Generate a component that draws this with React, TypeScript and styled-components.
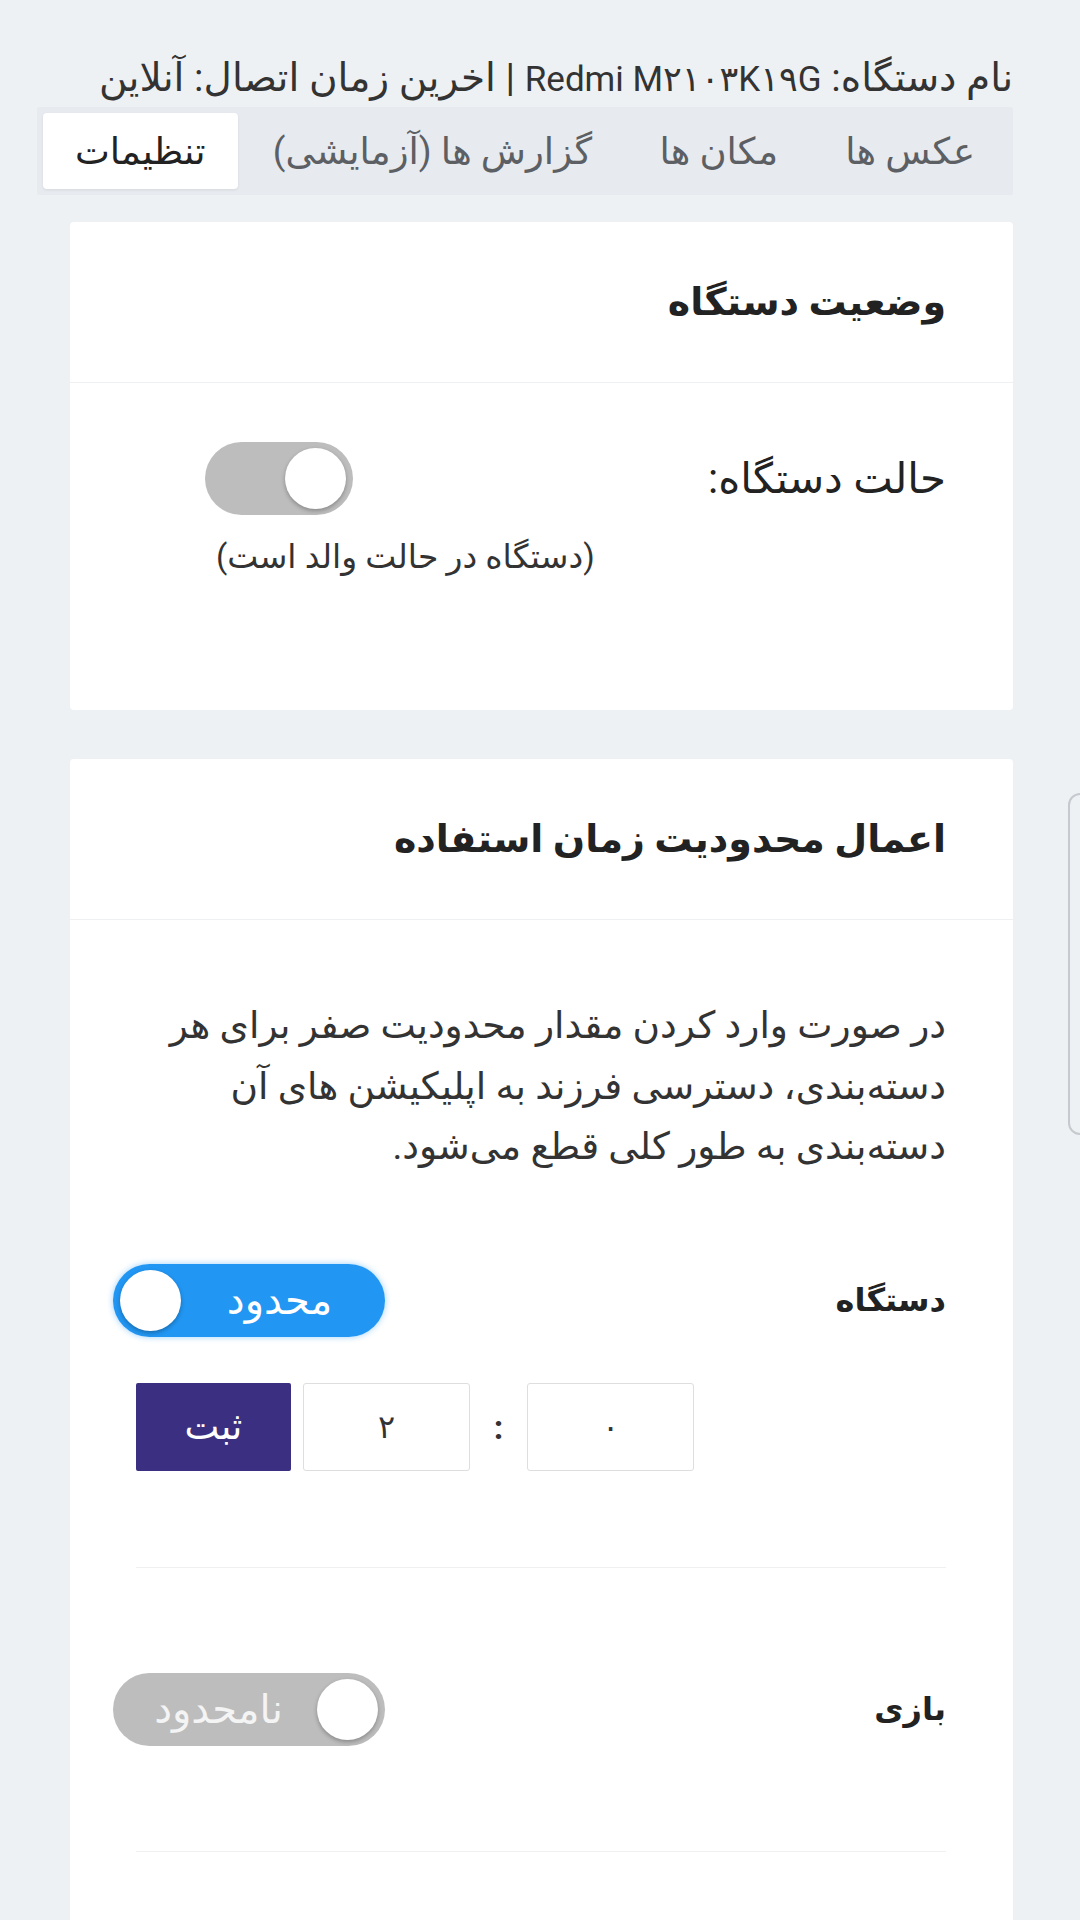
import React from 'react';
import styled, { createGlobalStyle } from 'styled-components';

const GlobalStyle = createGlobalStyle`
  body {
    margin: 0;
    background: #eef1f4;
    font-family: Roboto, "DejaVu Sans", sans-serif;
    direction: rtl;
    overflow-x: hidden;
    color: #222;
  }
`;

const Page = styled.div`
  padding: 53px 67px 0 37px;
`;

const DeviceInfo = styled.div`
  font-size: 39px;
  line-height: 50px;
  color: #333;
  white-space: nowrap;
`;

const Latin = styled.span`
  font-size: 35px;
`;

const TabBar = styled.div`
  margin-top: 2px;
  height: 88px;
  box-sizing: border-box;
  padding: 6px;
  background: #e7eaee;
  display: flex;
  justify-content: space-between;
  border-radius: 2px;
`;

const Tab = styled.div<{ $active?: boolean }>`
  display: flex;
  align-items: center;
  padding: 0 32px;
  font-size: 37px;
  color: ${p => (p.$active ? '#222' : '#5c5f63')};
  background: ${p => (p.$active ? '#fff' : 'transparent')};
  border-radius: 4px;
  box-shadow: ${p => (p.$active ? '0 1px 3px rgba(0,0,0,0.08)' : 'none')};
`;

const Cards = styled.div`
  margin: 27px 0 0 33px;
`;

const Card = styled.div`
  background: #fff;
  border-radius: 4px;
  margin-bottom: 49px;
`;

const CardHeader = styled.div`
  height: 160px;
  display: flex;
  align-items: center;
  padding: 0 67px 0 66px;
  border-bottom: 1px solid #eef0f2;
`;

const CardTitle = styled.h3`
  margin: 0;
  font-size: 38px;
  font-weight: 700;
  color: #222;
`;

const CardBody = styled.div<{ $pad: string }>`
  padding: ${p => p.$pad};
`;

const StatusRow = styled.div`
  display: flex;
  justify-content: space-between;
  align-items: flex-start;
`;

const RowLabel = styled.div<{ $bold?: boolean }>`
  font-size: ${p => (p.$bold ? 32 : 42)}px;
  line-height: 73px;
  font-weight: ${p => (p.$bold ? 700 : 400)};
  color: #222;
`;

const ToggleColumn = styled.div`
  display: flex;
  flex-direction: column;
  align-items: flex-end;
  margin-left: 69px;
`;

const Hint = styled.div`
  margin: 22px 0 0 11px;
  font-size: 33px;
  line-height: 40px;
  color: #333;
`;

const Switch = styled.div<{ $on?: boolean; $wide?: boolean }>`
  direction: ltr;
  width: ${p => (p.$wide ? 272 : 148)}px;
  height: 73px;
  margin-left: ${p => (p.$wide ? -23 : 0)}px;
  box-sizing: border-box;
  padding: 6px 7px;
  border-radius: 37px;
  background: ${p => (p.$on ? '#2196f3' : '#bdbdbd')};
  box-shadow: ${p => (p.$on ? '0 0 6px rgba(33,150,243,0.45)' : 'none')};
  display: flex;
  flex-direction: ${p => (p.$on ? 'row' : 'row-reverse')};
  align-items: center;
`;

const Knob = styled.div`
  width: 61px;
  height: 61px;
  border-radius: 50%;
  background: #fff;
  box-shadow: 0 2px 4px rgba(0, 0, 0, 0.28);
  flex-shrink: 0;
`;

const SwitchText = styled.span<{ $on?: boolean }>`
  flex: 1;
  text-align: center;
  font-size: 40px;
  color: ${p => (p.$on ? '#fff' : '#f4f4f4')};
  direction: rtl;
`;

const Note = styled.p`
  margin: 0;
  font-size: 37.5px;
  line-height: 60.5px;
  color: #333;
`;

const Category = styled.div<{ $limited?: boolean }>`
  padding: 105px 0 ${p => (p.$limited ? 96 : 105)}px;
  border-bottom: 1px solid #f0f0f0;

  &:first-of-type {
    padding-top: 87px;
  }
`;

const CategoryHead = styled.div`
  display: flex;
  justify-content: space-between;
  align-items: center;
`;

const LimitRow = styled.div`
  direction: ltr;
  display: flex;
  align-items: stretch;
  height: 88px;
  margin-top: 46px;
`;

const SaveButton = styled.button`
  width: 155px;
  margin-right: 12px;
  border: none;
  border-radius: 2px;
  background: #3a2f80;
  color: #fff;
  font-family: inherit;
  font-size: 37px;
`;

const TimeInput = styled.input`
  width: 167px;
  box-sizing: border-box;
  border: 1px solid #dedede;
  border-radius: 3px;
  text-align: center;
  font-family: inherit;
  font-size: 32px;
  color: #333;
  background: #fff;
  outline: none;
`;

const Colon = styled.div`
  width: 57px;
  display: flex;
  align-items: center;
  justify-content: center;
  font-size: 34px;
  font-weight: 700;
  color: #333;
`;

const SideHandle = styled.div`
  position: fixed;
  top: 793px;
  left: 1068px;
  width: 60px;
  height: 342px;
  box-sizing: border-box;
  border: 2px solid #c6cacf;
  border-radius: 12px;
  background: #eef1f4;
`;

const categories = [
  { name: 'دستگاه', limited: true },
  { name: 'بازی', limited: false },
];

const LabeledSwitch: React.FC<{ on: boolean }> = ({ on }) => (
  <Switch $on={on} $wide>
    <Knob />
    <SwitchText $on={on}>{on ? 'محدود' : 'نامحدود'}</SwitchText>
  </Switch>
);

export default function App() {
  return (
    <>
      <GlobalStyle />
      <Page>
        <DeviceInfo>
          نام دستگاه: <Latin>Redmi M۲۱۰۳K۱۹G</Latin> | اخرین زمان اتصال: آنلاین
        </DeviceInfo>
        <TabBar>
          <Tab>عکس ها</Tab>
          <Tab>مکان ها</Tab>
          <Tab>گزارش ها (آزمایشی)</Tab>
          <Tab $active>تنظیمات</Tab>
        </TabBar>

        <Cards>
          <Card>
            <CardHeader>
              <CardTitle>وضعیت دستگاه</CardTitle>
            </CardHeader>
            <CardBody $pad="59px 67px 133px 66px">
              <StatusRow>
                <RowLabel>حالت دستگاه:</RowLabel>
                <ToggleColumn>
                  <Switch>
                    <Knob />
                  </Switch>
                  <Hint>(دستگاه در حالت والد است)</Hint>
                </ToggleColumn>
              </StatusRow>
            </CardBody>
          </Card>

          <Card>
            <CardHeader>
              <CardTitle>اعمال محدودیت زمان استفاده</CardTitle>
            </CardHeader>
            <CardBody $pad="75px 67px 140px 66px">
              <Note>
                در صورت وارد کردن مقدار محدودیت صفر برای هر دسته‌بندی، دسترسی فرزند به اپلیکیشن های آن
                دسته‌بندی به طور کلی قطع می‌شود.
              </Note>
              {categories.map(c => (
                <Category key={c.name} $limited={c.limited}>
                  <CategoryHead>
                    <RowLabel $bold>{c.name}</RowLabel>
                    <LabeledSwitch on={c.limited} />
                  </CategoryHead>
                  {c.limited && (
                    <LimitRow>
                      <SaveButton>ثبت</SaveButton>
                      <TimeInput defaultValue="۲" />
                      <Colon>:</Colon>
                      <TimeInput defaultValue="۰" />
                    </LimitRow>
                  )}
                </Category>
              ))}
            </CardBody>
          </Card>
        </Cards>
      </Page>
      <SideHandle />
    </>
  );
}
